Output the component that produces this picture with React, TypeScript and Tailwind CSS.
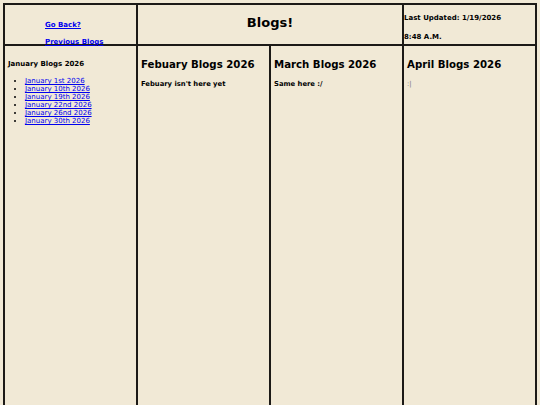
export default function App() {
  const janLinks = [
    "January 1st 2026",
    "January 10th 2026",
    "January 19th 2026",
    "January 22nd 2026",
    "January 26nd 2026",
    "January 30th 2026",
  ];

  return (
    <div className="min-h-screen bg-[#f1e9d6] pl-[3px] pt-[3px] font-['DejaVu_Sans',Verdana,sans-serif] text-black">
      <div className="grid w-[534px] grid-cols-[133px_133px_133px_131px] grid-rows-[41px_420px] border-2 border-[#1c1a17]">
        {/* header */}
        <div className="flex flex-col border-b-2 border-r-2 border-[#1c1a17] pl-[40px] pt-[16px] text-[7px] font-bold leading-[8px]">
          <a href="#" className="text-[#0000ee] underline">
            Go Back?
          </a>
          <a href="#" className="mt-[9px] text-[#0000ee] underline">
            Previous Blogs
          </a>
        </div>
        <div className="col-span-2 border-b-2 border-r-2 border-[#1c1a17] pt-[10px] text-center text-[13px] font-bold leading-[16px]">
          Blogs!
        </div>
        <div className="flex flex-col border-b-2 border-[#1c1a17] pt-[9px] text-[7px] font-bold leading-[8px]">
          <span>Last Updated: 1/19/2026</span>
          <span className="mt-[11px]">8:48 A.M.</span>
        </div>

        {/* body */}
        <div className="border-r-2 border-[#1c1a17] px-[3px] pt-[14px] text-[7px] leading-[8px]">
          <div className="font-bold">January Blogs 2026</div>
          <ul className="mt-[9px] list-disc pl-[17px]">
            {janLinks.map((l) => (
              <li key={l}>
                <a href="#" className="text-[#0000ee] underline">
                  {l}
                </a>
              </li>
            ))}
          </ul>
        </div>
        <div className="border-r-2 border-[#1c1a17] px-[3px] pt-[13px]">
          <div className="text-[10.2px] font-bold leading-[12px]">Febuary Blogs 2026</div>
          <div className="mt-[9px] text-[6.8px] font-bold leading-[8px]">Febuary isn't here yet</div>
        </div>
        <div className="border-r-2 border-[#1c1a17] px-[3px] pt-[13px]">
          <div className="text-[10.2px] font-bold leading-[12px]">March Blogs 2026</div>
          <div className="mt-[9px] text-[6.8px] font-bold leading-[8px]">Same here :/</div>
        </div>
        <div className="px-[3px] pt-[13px]">
          <div className="text-[10.2px] font-bold leading-[12px]">April Blogs 2026</div>
          <div className="mt-[9px] text-[6.8px] leading-[8px] text-[#777]">:|</div>
        </div>
      </div>
    </div>
  );
}
